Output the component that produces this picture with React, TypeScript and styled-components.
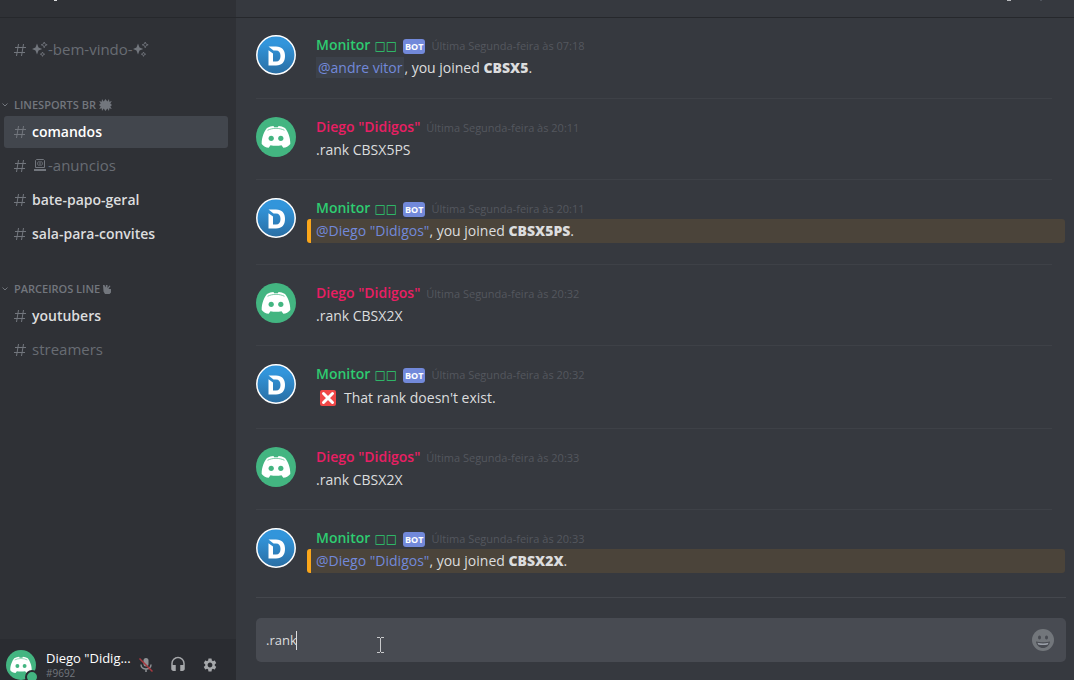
import React from "react";
import styled, { createGlobalStyle, css } from "styled-components";
import { MdSettings, MdHeadset } from "react-icons/md";

const GlobalStyle = createGlobalStyle`
  *, *::before, *::after { box-sizing: border-box; }
  body {
    margin: 0;
    background: #36393f;
    color: #dcddde;
    font-family: "Open Sans", "Noto Sans", sans-serif;
    font-size: 14px;
  }
  a { color: inherit; text-decoration: none; }
  button { padding: 0; border: 0; background: none; color: inherit; font: inherit; cursor: pointer; }
`;

const Page = styled.div`
  display: flex;
  height: 100vh;
  overflow: hidden;
`;

const Sidebar = styled.aside`
  display: flex;
  flex: none;
  flex-direction: column;
  width: 236px;
  background: #2f3136;
`;

const Header = styled.header<{ $end?: boolean }>`
  display: flex;
  flex: none;
  gap: 29px;
  justify-content: ${(p) => (p.$end ? "flex-end" : "flex-start")};
  height: 18px;
  padding: ${(p) => (p.$end ? "0 32px" : "0 54px")};
  border-bottom: 1px solid #26282c;
`;

const HeaderMark = styled.span<{ $width: number; $color: string }>`
  width: ${(p) => p.$width}px;
  height: 1px;
  background: ${(p) => p.$color};
`;

const ChannelNav = styled.nav`
  flex: 1;
  min-height: 0;
  overflow: hidden;
  padding: 16px 8px 0 4px;
`;

const ChannelList = styled.ul`
  display: flex;
  flex-direction: column;
  gap: 2px;
  margin: 0;
  padding: 0;
  list-style: none;
`;

const Category = styled.h2`
  display: flex;
  align-items: center;
  gap: 3px;
  height: 16px;
  margin: 31px 0 3px -3px;
  color: #72767d;
  font-size: 11px;
  font-weight: 600;
  line-height: 16px;
  svg { flex: none; }
  svg:first-child { margin-right: 2px; }
`;

const ChannelName = styled.span`
  display: flex;
  align-items: center;
  padding-bottom: 2px;
`;

const Channel = styled.a<{ $state?: "active" | "unread" }>`
  display: flex;
  align-items: center;
  gap: 6px;
  height: 32px;
  padding: 0 10px;
  border-radius: 3px;
  color: #686c73;
  font-size: 15px;
  line-height: 20px;
  svg { flex: none; }
  ${(p) => p.$state && css`
    color: #dcddde;
    font-size: 14px;
    font-weight: 600;
    ${ChannelName} { padding-bottom: 0; }
  `}
  ${(p) => p.$state === "active" && css`color: #fff; background: #42464d;`}
`;

const UserPanel = styled.section`
  display: flex;
  flex: none;
  align-items: flex-start;
  height: 41px;
  padding: 11px 10px 0 6px;
  overflow: hidden;
  background: #2a2c31;
`;

const UserAvatar = styled.div`
  position: relative;
  flex: none;
  width: 30px;
  height: 30px;
`;

const Status = styled.span`
  position: absolute;
  right: -3px;
  bottom: -4px;
  width: 14px;
  height: 14px;
  border: 2px solid #2a2c31;
  border-radius: 50%;
  background: #43b581;
`;

const UserText = styled.div`
  flex: 1;
  min-width: 0;
  margin-left: 10px;
`;

const UserName = styled.div`
  color: #fff;
  font-size: 13px;
  line-height: 16px;
  white-space: nowrap;
`;

const UserTag = styled.div`
  color: #72767d;
  font-size: 10px;
  line-height: 14px;
`;

const PanelButtons = styled.div`
  display: flex;
  flex: none;
`;

const PanelButton = styled.button`
  display: flex;
  align-items: center;
  justify-content: center;
  width: 32px;
  height: 30px;
  color: #a6a8ab;
`;

const Chat = styled.main`
  display: flex;
  flex: 1;
  flex-direction: column;
  min-width: 0;
`;

const Messages = styled.div`
  flex: 1;
  min-height: 0;
  overflow: hidden;
  padding: 0 22px 0 20px;
`;

const Message = styled.article`
  display: flex;
  gap: 20px;
  padding: 17px 0;
  &:first-child { padding-bottom: 18px; }
  & + & { padding-top: 18px; border-top: 1px solid #3e4147; }
`;

const MessageBody = styled.div`
  flex: 1;
  min-width: 0;
`;

const MessageHead = styled.div`
  display: flex;
  align-items: flex-start;
  height: 21px;
`;

const Author = styled.span<{ $color: string }>`
  color: ${(p) => p.$color};
  font-size: 14px;
  font-weight: 600;
  line-height: 20px;
`;

const Boxes = styled.span`
  margin-left: 4px;
  font-family: "DejaVu Sans", sans-serif;
  font-size: 12px;
  font-weight: 400;
`;

const BotTag = styled.span`
  margin: 4px 0 0 6px;
  padding: 0 2px;
  border-radius: 3px;
  background: #7289da;
  color: #fff;
  font-size: 9px;
  font-weight: 700;
  line-height: 15px;
`;

const Time = styled.time`
  margin: 2px 0 0 6px;
  color: #54575e;
  font-size: 11px;
  line-height: 18px;
`;

const Line = styled.p<{ $kind?: "mention" | "emoji" }>`
  margin: 0;
  color: #dcddde;
  font-size: 14px;
  line-height: ${(p) => (p.$kind === "emoji" ? 26 : 24)}px;
  ${(p) => p.$kind === "mention" && css`
    margin: 0 -13px 4px -9px;
    padding-left: 5px;
    border-left: 4px solid #faa61a;
    border-radius: 3px;
    background: #4b443a;
  `}
  strong { font-weight: 800; }
  svg { margin: 0 8px 0 4px; vertical-align: -3px; }
`;

const Mention = styled.a<{ $boxed?: boolean }>`
  color: #7289da;
  ${(p) => p.$boxed && css`padding: 1px 2px; background: #3c414a;`}
`;

const Composer = styled.form`
  flex: none;
  margin: 0 8px 0 20px;
  padding: 20px 0 18px;
  border-top: 1px solid #44474d;
`;

const Field = styled.div`
  position: relative;
  display: flex;
  align-items: center;
  height: 44px;
  padding: 0 12px 0 10px;
  border-radius: 5px;
  background: #484b52;
`;

const TextLabel = styled.label`
  display: flex;
  flex: 1;
  align-items: center;
  cursor: text;
`;

const TextInput = styled.input`
  field-sizing: content;
  padding: 0;
  border: 0;
  outline: 0;
  background: none;
  color: #dcddde;
  font: inherit;
  font-size: 13px;
`;

const Caret = styled.span`
  width: 1px;
  height: 19px;
  margin-left: -1px;
  background: #dcddde;
`;

const EmojiButton = styled.button`
  display: flex;
`;

const Pointer = styled.svg`
  position: absolute;
  left: 121px;
  top: 19px;
`;

const HashIcon = () => (
  <svg width="12" height="12" viewBox="0 0 12 12" fill="none" stroke="#72767d" strokeWidth="1" aria-hidden="true">
    <path d="M4.500 0 2.500 12M9.500 0 7.500 12M1 3.500h11M0 8.500h11" />
  </svg>
);

const Chevron = () => (
  <svg width="8" height="8" viewBox="0 0 8 8" fill="none" stroke="#72767d" aria-hidden="true">
    <path d="M1.500 2.500 4 5l2.500-2.500" />
  </svg>
);

const Sparkles = () => (
  <svg width="16" height="16" viewBox="0 0 16 16" fill="#72767d" aria-hidden="true">
    <path d="M5 2.500 6.500 6.500 10.200 8 6.500 9.500 5 13.500 3.500 9.500 0 8l3.500-1.500z" />
    <path d="m12.200 1 .8 2 2.200.8-2.200.8-.8 2.200-.8-2.200-2.200-.8 2.200-.8zM10.500 11l.6 1.600 1.600.6-1.600.6-.6 1.600-.6-1.600-1.600-.6 1.600-.6z" fill="none" stroke="#72767d" strokeWidth=".8" />
  </svg>
);

const Burst = () => (
  <svg width="13" height="12" viewBox="0 0 13 12" fill="#72767d" aria-hidden="true">
    <path d="M3 0 4.700 2.500 6.500 0l1.800 2.500L10 0l.3 2.700 2.500-.7-1.500 2.500L13 6l-1.700 1.500 1.500 2.500-2.500-.7L10 12 8.300 9.500 6.500 12 4.700 9.500 3 12l-.3-2.700-2.500.7 1.500-2.500L0 6l1.700-1.500L.2 2l2.500.7z" />
  </svg>
);

const Hand = () => (
  <svg width="8" height="9" viewBox="0 0 8 9" fill="#72767d" aria-hidden="true">
    <path d="M0 0h1.500l1 2.500L3 0h1.500v3L6.500.5 7.500 1 5.500 4H8v3.500L6.500 9H2L.5 6.500z" />
  </svg>
);

const Laptop = () => (
  <svg width="16" height="14" viewBox="0 0 16 14" fill="none" stroke="#72767d" aria-hidden="true">
    <path d="M3.500 9.500v-7l1-1h7l1 1v7z" />
    <path d="M6.500 3.500C5.300 5 5.300 6 6.500 7.500M9.500 3.500c1.200 1.500 1.200 2.500 0 4M8 3v5" />
    <path d="M2 12h12" strokeWidth="2" />
  </svg>
);

const ClydeAvatar = ({ size }: { size: number }) => (
  <svg width={size} height={size} viewBox="0 0 40 40" role="img" aria-label="Diego">
    <circle cx="20" cy="20" r="20" fill="#43b581" />
    <path fill="#fff" d="M11 11C13 9.800 15.500 9.200 17.500 9l.6 1.200h3.800l.6-1.200c2 .2 4.500.8 6.500 2 2.500 3 5.500 9 5.300 16-1.800 2.500-4.300 3.600-7 3.700L25.500 28.300c-3.500.7-7.500.7-11 0L12.700 30.700C10 30.600 7.500 29.500 5.700 27 5.500 20 8.500 14 11 11z" />
    <path fill="none" stroke="#43b581" strokeWidth=".7" d="M11.500 13.300c5-2.600 12-2.600 17 0" />
    <circle cx="15.200" cy="21.300" r="2.600" fill="#43b581" />
    <circle cx="24.800" cy="21.300" r="2.600" fill="#43b581" />
  </svg>
);

const MonitorAvatar = () => (
  <svg width="40" height="40" viewBox="0 0 40 40" role="img" aria-label="Monitor">
    <defs>
      <linearGradient id="blue" x1="0" y1="0" x2="0" y2="1">
        <stop offset="0.2" stopColor="#3295db" />
        <stop offset="1" stopColor="#2a6ea3" />
      </linearGradient>
    </defs>
    <circle cx="20" cy="20" r="19.200" fill="url(#blue)" stroke="#fff" strokeWidth="1.500" />
    <path fill="#fff" d="M12.500 11.500H20c6 0 9 3.800 9 9.500s-3 9.500-9 9.500h-7.500V15.300l4.500 3.200v8h3c3 0 4.500-2 4.500-5.500s-1.500-5.500-4.500-5.500h-2.500z" />
  </svg>
);

const CrossEmoji = () => (
  <svg width="16" height="16" viewBox="0 0 16 16" role="img" aria-label="X">
    <rect width="16" height="16" rx="2" fill="#f04747" />
    <path d="m3.500 3.500 9 9m0-9-9 9" stroke="#fff" strokeWidth="3" strokeLinecap="round" />
  </svg>
);

const Smiley = () => (
  <svg width="22" height="22" viewBox="0 0 22 22" aria-hidden="true">
    <circle cx="11" cy="11" r="11" fill="#72767b" />
    <ellipse cx="7.500" cy="8.500" rx="1.500" ry="2" fill="#484b52" />
    <ellipse cx="14.500" cy="8.500" rx="1.500" ry="2" fill="#484b52" />
    <path d="M4 12.500c4 1 10 1 14 0-.5 4-3.500 6.500-7 6.500s-6.500-2.500-7-6.500z" fill="#484b52" />
    <path d="M5.500 13.800c3.500.8 7.500.8 11 0l-.6 1.700c-3 .7-6.800.7-9.800 0z" fill="#9a9fa8" />
  </svg>
);

const MutedMic = () => (
  <svg width="16" height="16" viewBox="0 0 16 16" fill="none" aria-hidden="true">
    <rect x="5.500" y="1" width="5" height="8.500" rx="2.500" fill="#8e9195" />
    <path d="M3 7.500c0 6 10 6 10 0M8 12v3" stroke="#8e9195" strokeWidth="1.500" />
    <path d="m1.500 1.500 13 13" stroke="#a8383f" strokeWidth="1.500" />
  </svg>
);

type Msg = { bot?: boolean; time: string; text: React.ReactNode; kind?: "mention" | "emoji" };

const joined = (rank: string) => (
  <><Mention href="#diego">@Diego "Didigos"</Mention>, you joined <strong>{rank}</strong>.</>
);

const messages: Msg[] = [
  { bot: true, time: "07:18", text: <><Mention $boxed href="#andre">@andre vitor</Mention>, you joined <strong>CBSX5</strong>.</> },
  { time: "20:11", text: ".rank CBSX5PS" },
  { bot: true, time: "20:11", text: joined("CBSX5PS"), kind: "mention" },
  { time: "20:32", text: ".rank CBSX2X" },
  { bot: true, time: "20:32", text: <><CrossEmoji />That rank doesn't exist.</>, kind: "emoji" },
  { time: "20:33", text: ".rank CBSX2X" },
  { bot: true, time: "20:33", text: joined("CBSX2X"), kind: "mention" },
];

const ChannelLink = ({ id, state, children }: { id: string; state?: "active" | "unread"; children?: React.ReactNode }) => (
  <li>
    <Channel href={`#${id}`} $state={state}>
      <HashIcon />
      <ChannelName>{children ?? id}</ChannelName>
    </Channel>
  </li>
);

export default function App() {
  return (
    <>
      <GlobalStyle />
      <Page>
        <Sidebar>
          <Header><HeaderMark $width={3} $color="#dcddde" /></Header>
          <ChannelNav aria-label="Canais">
            <ChannelList>
              <ChannelLink id="bem-vindo"><Sparkles />-bem-vindo-<Sparkles /></ChannelLink>
            </ChannelList>
            <Category><Chevron />LINESPORTS BR <Burst /></Category>
            <ChannelList>
              <ChannelLink id="comandos" state="active" />
              <ChannelLink id="anuncios"><Laptop />-anuncios</ChannelLink>
              <ChannelLink id="bate-papo-geral" state="unread" />
              <ChannelLink id="sala-para-convites" state="unread" />
            </ChannelList>
            <Category><Chevron />PARCEIROS LINE<Hand /></Category>
            <ChannelList>
              <ChannelLink id="youtubers" state="unread" />
              <ChannelLink id="streamers" />
            </ChannelList>
          </ChannelNav>
          <UserPanel>
            <UserAvatar><ClydeAvatar size={30} /><Status /></UserAvatar>
            <UserText>
              <UserName>Diego "Didig...</UserName>
              <UserTag>#9692</UserTag>
            </UserText>
            <PanelButtons>
              <PanelButton aria-label="Microfone"><MutedMic /></PanelButton>
              <PanelButton aria-label="Fone"><MdHeadset size={18} /></PanelButton>
              <PanelButton aria-label="Ajustes"><MdSettings size={16} /></PanelButton>
            </PanelButtons>
          </UserPanel>
        </Sidebar>
        <Chat>
          <Header $end>
            <HeaderMark $width={4} $color="#b9bbbe" />
            <HeaderMark $width={2} $color="#4f545c" />
          </Header>
          <Messages>
            {messages.map((m, i) => (
              <Message key={i}>
                {m.bot ? <MonitorAvatar /> : <ClydeAvatar size={40} />}
                <MessageBody>
                  <MessageHead>
                    <Author $color={m.bot ? "#2ecc71" : "#e91e63"}>
                      {m.bot ? <>Monitor<Boxes>□□</Boxes></> : 'Diego "Didigos"'}
                    </Author>
                    {m.bot && <BotTag>BOT</BotTag>}
                    <Time>Última Segunda-feira às {m.time}</Time>
                  </MessageHead>
                  <Line $kind={m.kind}>{m.text}</Line>
                </MessageBody>
              </Message>
            ))}
          </Messages>
          <Composer>
            <Field>
              <TextLabel>
                <TextInput aria-label="Mensagem" defaultValue=".rank" />
                <Caret />
              </TextLabel>
              <EmojiButton type="button" aria-label="Emoji"><Smiley /></EmojiButton>
              <Pointer width="7" height="16" viewBox="0 0 7 16" fill="none" stroke="#c8c9cb" aria-hidden="true">
                <path d="M0 .5h3M4 .5h3M3.500 1v14M0 15.500h3M4 15.500h3" />
              </Pointer>
            </Field>
          </Composer>
        </Chat>
      </Page>
    </>
  );
}
